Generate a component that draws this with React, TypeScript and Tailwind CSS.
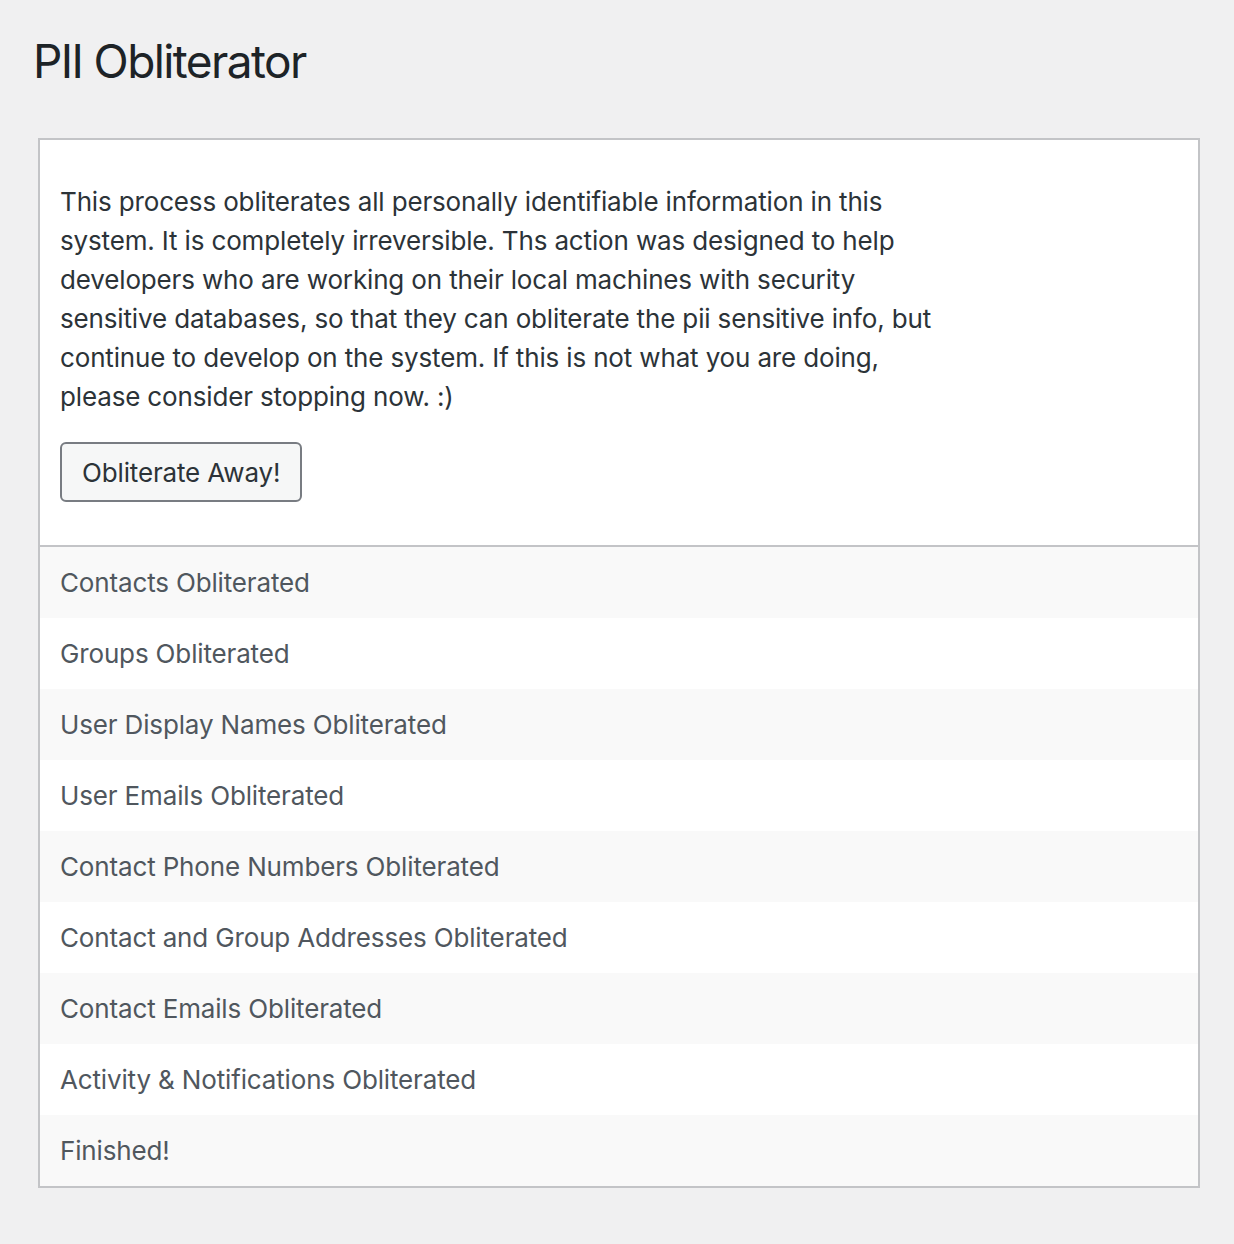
export default function App() {
  const rows = [
    "Contacts Obliterated",
    "Groups Obliterated",
    "User Display Names Obliterated",
    "User Emails Obliterated",
    "Contact Phone Numbers Obliterated",
    "Contact and Group Addresses Obliterated",
    "Contact Emails Obliterated",
    "Activity & Notifications Obliterated",
    "Finished!",
  ];
  return (
    <div className="min-h-[1244px] bg-[#f0f0f1] pl-[38px] pr-[34px] pt-[32px] pb-[56px]" style={{ fontFamily: "Inter, 'Noto Sans', sans-serif" }}>
      <h1 className="-ml-[5px] text-[46px] leading-[58px] tracking-[-1.6px] text-[#1d2327] font-normal">PII Obliterator</h1>
      <div className="mt-[48px] border-2 border-[#c3c4c7] bg-white">
        <div className="px-[20px] pt-[42px] pb-[43px] tracking-[-0.15px]">
          <p className="w-[890px] text-[26px] leading-[39px] text-[#2c3338]">
            This process obliterates all personally identifiable information in this system. It is completely irreversible. Ths action was designed to help developers who are working on their local machines with security sensitive databases, so that they can obliterate the pii sensitive info, but continue to develop on the system. If this is not what you are doing, please consider stopping now. :)
          </p>
          <button className="mt-[26px] h-[60px] rounded-[6px] border-2 border-[#787c82] bg-[#f6f7f7] px-[20px] text-[26px] text-[#2c3338]">
            Obliterate Away!
          </button>
        </div>
        <div className="border-t-2 border-[#c3c4c7] tracking-[-0.15px]">
          {rows.map((r, i) => (
            <div key={r} className={`flex h-[71px] items-center px-[20px] text-[26px] text-[#50575e] ${i % 2 === 0 ? "bg-[#f9f9f9]" : "bg-white"}`}>
              {r}
            </div>
          ))}
        </div>
      </div>
    </div>
  );
}
